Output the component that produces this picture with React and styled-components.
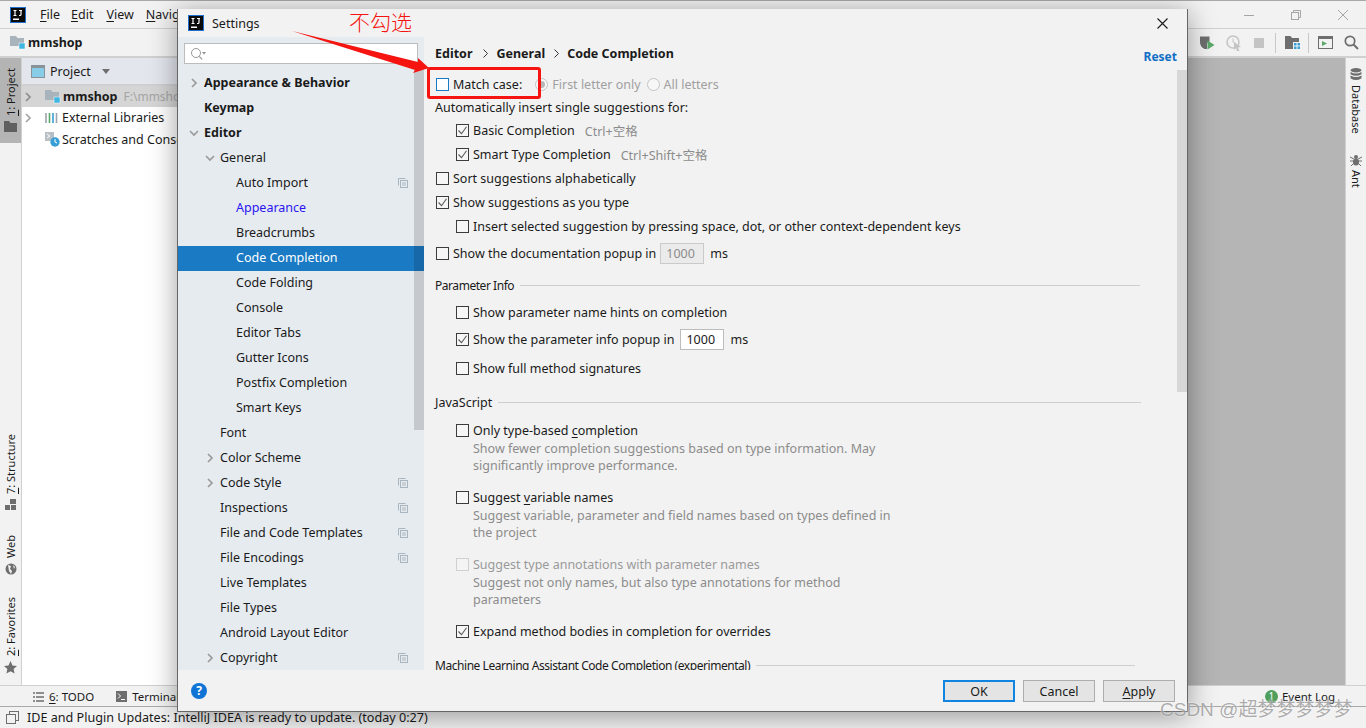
import styled, { createGlobalStyle } from 'styled-components';

const FONT = `'Noto Sans', 'Noto Sans CJK SC', sans-serif`;

const GlobalStyle = createGlobalStyle`
  html, body {
    margin: 0;
    padding: 0;
    background: #f2f2f2;
    overflow: hidden;
  }
  body {
    font-family: ${FONT};
    font-size: 12.5px;
    color: #1a1a1a;
  }
`;

const Page = styled.div`
  position: relative;
  width: 1366px;
  height: 728px;
  overflow: hidden;
  display: flex;
  flex-direction: column;
  background: #f2f2f2;
`;

/* ---------- IDE behind the dialog ---------- */

const MenuBar = styled.div`
  height: 27px;
  border-top: 1px solid #a8a8a8;
  border-bottom: 1px solid #d0d0d0;
  display: flex;
  align-items: center;
  padding: 0 18px 0 10px;
  flex-shrink: 0;
`;

const MenuItem = styled.span`
  margin-left: ${(p) => p.$gap}px;
  u { text-underline-offset: 2px; }
`;

const WindowControls = styled.div`
  margin-left: auto;
  display: flex;
  gap: 37px;
  align-items: center;
`;

const NavBar = styled.div`
  height: 27px;
  border-bottom: 2px solid #d0d0d0;
  display: flex;
  align-items: center;
  padding: 0 7px 0 10px;
  flex-shrink: 0;
`;

const NavTitle = styled.span`
  font-weight: 700;
  margin-left: 2px;
`;

const Toolbar = styled.div`
  margin-left: auto;
  display: flex;
  align-items: center;
`;

const ToolIcon = styled.svg`
  display: block;
  flex-shrink: 0;
  margin-left: ${(p) => p.$gap || 0}px;
`;

const ToolSep = styled.span`
  width: 1px;
  height: 20px;
  background: #c8c8c8;
  margin-left: ${(p) => p.$gap}px;
`;

const Main = styled.div`
  flex: 1;
  display: flex;
  min-height: 0;
`;

const LeftStrip = styled.div`
  width: 21px;
  border-right: 1px solid #d0d0d0;
  display: flex;
  flex-direction: column;
  justify-content: space-between;
  padding-bottom: 11px;
  flex-shrink: 0;
`;

const StripButton = styled.div`
  display: flex;
  flex-direction: column;
  align-items: center;
  gap: ${(p) => p.$gap || 5}px;
  padding: ${(p) => (p.$active ? '10px 0 11px' : '0')};
  background: ${(p) => (p.$active ? '#b4b4b4' : 'transparent')};
  margin-top: ${(p) => p.$top || 0}px;
`;

const StripLabel = styled.span`
  writing-mode: vertical-rl;
  transform: rotate(180deg);
  font-size: 11px;
  line-height: 14px;
  padding-right: 1px;
  u { text-underline-offset: 1px; }
`;

const RightLabel = styled.span`
  writing-mode: vertical-rl;
  font-size: 11px;
  line-height: 14px;
`;

const StripBottom = styled.div`
  display: flex;
  flex-direction: column;
`;

const ProjectPane = styled.div`
  width: 156px;
  background: #fff;
  flex-shrink: 0;
`;

const PaneHeader = styled.div`
  height: 26px;
  border-bottom: 2px solid #d0d0d0;
  background: #e3e6ed;
  display: flex;
  align-items: center;
  padding-left: 9px;
  gap: 5px;
`;

const PaneCaret = styled.span`
  width: 0;
  height: 0;
  border-left: 4px solid transparent;
  border-right: 4px solid transparent;
  border-top: 5px solid #6e6e6e;
  margin-left: 6px;
`;

const TreeRow = styled.div`
  height: ${(p) => p.$h || 21}px;
  display: flex;
  align-items: center;
  padding-left: 1px;
  white-space: nowrap;
  overflow: hidden;
  background: ${(p) => (p.$selected ? '#d5d5d5' : 'transparent')};
  gap: 2px;
`;

const TreeBold = styled.b`
  font-weight: 700;
`;

const TreeHint = styled.span`
  color: #a5a5a5;
  font-size: 12px;
  margin-left: 4px;
`;

const EditorArea = styled.div`
  flex: 1;
  background: #b5b5b5;
`;

const RightStrip = styled.div`
  width: 20px;
  border-left: 1px solid #d0d0d0;
  display: flex;
  flex-direction: column;
  align-items: center;
  padding-top: 10px;
  flex-shrink: 0;
`;

const RightTool = styled.div`
  display: flex;
  flex-direction: column;
  align-items: center;
  gap: 4px;
  margin-bottom: 20px;
`;

const BottomBar = styled.div`
  height: 19px;
  border-top: 1px solid #d0d0d0;
  border-bottom: 1px solid #a9a9a9;
  display: flex;
  align-items: center;
  padding: 1px 31px 0 33px;
  font-size: 11.5px;
  flex-shrink: 0;
  u { text-underline-offset: 2px; }
`;

const BottomTool = styled.span`
  display: flex;
  align-items: center;
  gap: 5px;
  margin-right: ${(p) => p.$gap || 0}px;
`;

const EventLog = styled.span`
  margin-left: auto;
  display: flex;
  align-items: center;
  gap: 4px;
`;

const EventBadge = styled.span`
  width: 13px;
  height: 13px;
  border-radius: 50%;
  background: #4f9f5c;
  color: #fff;
  font-size: 10px;
  line-height: 13px;
  text-align: center;
`;

const StatusBar = styled.div`
  height: 21px;
  display: flex;
  align-items: center;
  padding-left: 6px;
  gap: 8px;
  font-size: 12.6px;
  flex-shrink: 0;
`;

/* ---------- settings dialog ---------- */

const Dialog = styled.div`
  position: absolute;
  left: 177px;
  top: 9px;
  width: 1011px;
  height: 703px;
  box-sizing: border-box;
  background: #f2f2f2;
  border: 1px solid #666;
  border-top: none;
  box-shadow: 0 4px 26px rgba(0, 0, 0, 0.38);
  display: flex;
  flex-direction: column;
`;

const TitleBar = styled.div`
  height: 28px;
  display: flex;
  align-items: center;
  padding: 0 19px 0 10px;
  gap: 8px;
  flex-shrink: 0;
`;

const CloseButton = styled.svg`
  margin-left: auto;
  display: block;
`;

const DialogBody = styled.div`
  flex: 1;
  display: flex;
  min-height: 0;
`;

const Sidebar = styled.div`
  position: relative;
  width: 246px;
  background: #e6ebf0;
  flex-shrink: 0;
  display: flex;
  flex-direction: column;
  overflow: hidden;
`;

const SearchBox = styled.div`
  margin: 6px 6px 7px 6px;
  height: 21px;
  box-sizing: border-box;
  background: #fff;
  border: 1px solid #bcbcbc;
  display: flex;
  align-items: center;
  padding-left: 5px;
  flex-shrink: 0;
`;

const SideTree = styled.div`
  display: flex;
  flex-direction: column;
`;

const SideRow = styled.div`
  height: 25px;
  box-sizing: border-box;
  flex-shrink: 0;
  display: flex;
  align-items: center;
  padding: 0 16px 2px ${(p) => 11 + p.$level * 16}px;
  white-space: nowrap;
  font-weight: ${(p) => (p.$level === 0 ? 700 : 400)};
  color: ${(p) => (p.$selected ? '#fff' : p.$link ? '#2a14f0' : '#1a1a1a')};
  background: ${(p) => (p.$selected ? '#1a7ac4' : 'transparent')};
`;

const ArrowSlot = styled.span`
  width: 15px;
  flex-shrink: 0;
  display: flex;
  align-items: center;
`;

const CopyMark = styled.svg`
  margin-left: auto;
  display: block;
`;

const SideScroll = styled.div`
  position: absolute;
  right: 0;
  top: 33px;
  width: 10px;
  height: 360px;
  background: rgba(0, 0, 0, 0.14);
`;

const Panel = styled.div`
  position: relative;
  flex: 1;
  min-width: 0;
  display: flex;
  flex-direction: column;
`;

const PanelHeader = styled.div`
  height: 33px;
  flex-shrink: 0;
  display: flex;
  padding: 7px 10px 0 11px;
  box-sizing: border-box;
  font-weight: 700;
`;

const Crumb = styled.span`
  display: flex;
  align-items: center;
  height: 18px;
`;

const CrumbSep = styled.svg`
  margin: 0 8px 0 ${(p) => p.$left}px;
  display: block;
`;

const ResetLink = styled.a`
  margin-left: auto;
  color: #0f6fc6;
  margin-top: 4px;
  height: 18px;
  font-size: 12px;
  line-height: 18px;
`;

const PanelScroll = styled.div`
  flex: 1;
  min-height: 0;
  overflow: hidden;
  padding-left: 11px;
`;

const Row = styled.div`
  height: 18px;
  margin-top: ${(p) => p.$top || 0}px;
  padding-left: ${(p) => (p.$indent ? 21 : 1)}px;
  display: flex;
  align-items: center;
  white-space: nowrap;
  color: ${(p) => (p.$muted ? '#9a9a9a' : '#1a1a1a')};
  u { text-underline-offset: 2px; }
`;

const PlainRow = styled(Row)`
  padding-left: 0;
`;

const RowText = styled.span`
  color: ${(p) => (p.$muted ? '#a0a0a0' : 'inherit')};
`;

const Box = styled.span`
  width: 13px;
  height: 13px;
  flex-shrink: 0;
  margin-right: 4px;
  box-sizing: border-box;
  border: 1px solid ${(p) => (p.$focus ? '#1a7ac4' : p.$disabled ? '#d0d0d0' : '#3c3c3c')};
  background: ${(p) => (p.$focus ? '#fff' : p.$disabled ? '#f4f4f4' : '#f6f6f6')};
  display: flex;
  align-items: center;
  justify-content: center;
`;

const Radio = styled.span`
  width: 13px;
  height: 13px;
  flex-shrink: 0;
  box-sizing: border-box;
  margin: 0 4px 0 ${(p) => p.$left}px;
  border: 1px solid #c4c4c4;
  border-radius: 50%;
  background: #f7f7f7;
  display: flex;
  align-items: center;
  justify-content: center;
  &::after {
    content: '';
    width: 7px;
    height: 7px;
    border-radius: 50%;
    background: ${(p) => (p.$on ? '#b8b8b8' : 'transparent')};
  }
`;

const Shortcut = styled.span`
  color: #8c8c8c;
  margin-left: ${(p) => p.$left}px;
`;

const NumberField = styled.span`
  width: 44px;
  height: 21px;
  box-sizing: border-box;
  margin: 0 6px 0 ${(p) => (p.$disabled ? 4 : 6)}px;
  padding-left: 5px;
  line-height: 19px;
  border: 1px solid ${(p) => (p.$disabled ? '#cacaca' : '#bcbcbc')};
  background: ${(p) => (p.$disabled ? '#ebebeb' : '#fff')};
  color: ${(p) => (p.$disabled ? '#8c8c8c' : '#1a1a1a')};
`;

const Description = styled.div`
  padding: 1px 0 0 38px;
  line-height: 17px;
  color: #8c8c8c;
  white-space: nowrap;
`;

const SectionTitle = styled.div`
  height: 18px;
  margin-top: ${(p) => p.$top}px;
  display: flex;
  align-items: center;
  white-space: nowrap;
  gap: 6px;
  font-size: ${(p) => (p.$tight ? 12 : 12.5)}px;
  letter-spacing: ${(p) => (p.$tight ? -0.45 : 0)}px;
  &::after {
    content: '';
    height: 1px;
    background: #cfcfcf;
    width: ${(p) => p.$line}px;
  }
`;

const PanelThumb = styled.div`
  position: absolute;
  right: 0;
  top: 33px;
  width: 10px;
  height: 322px;
  background: #d7d7d7;
`;

const Footer = styled.div`
  height: 41px;
  box-sizing: border-box;
  flex-shrink: 0;
  display: flex;
  align-items: center;
  padding: 1px 12px 0 13px;
  gap: 8px;
`;

const HelpButton = styled.span`
  width: 16px;
  height: 16px;
  border-radius: 50%;
  background: #0f74d6;
  color: #fff;
  font-size: 12px;
  font-weight: 700;
  line-height: 16px;
  text-align: center;
  margin-right: auto;
`;

const DialogButton = styled.button`
  width: 72px;
  height: 22px;
  box-sizing: border-box;
  padding: 0;
  font: inherit;
  color: #1a1a1a;
  background: #e4e4e4;
  border: ${(p) => (p.$primary ? '2px solid #0f84e0' : '1px solid #adadad')};
  u { text-underline-offset: 2px; }
`;

/* ---------- things drawn over the screenshot ---------- */

const RedBox = styled.div`
  position: absolute;
  left: 427px;
  top: 67px;
  width: 114px;
  height: 32px;
  box-sizing: border-box;
  border: 3px solid #f5140f;
  border-radius: 3px;
`;

const RedArrow = styled.svg`
  position: absolute;
  left: 285px;
  top: 25px;
`;

const RedNote = styled.span`
  position: absolute;
  left: 349px;
  top: 6px;
  font-family: 'Noto Sans CJK SC', sans-serif;
  font-weight: 300;
  font-size: 21px;
  line-height: 30px;
  color: #f5140f;
`;

const Watermark = styled.span`
  position: absolute;
  left: 1160px;
  top: 697px;
  font-family: 'Liberation Sans', 'Noto Sans CJK SC', sans-serif;
  font-size: 19px;
  line-height: 26px;
  white-space: nowrap;
  color: rgba(120, 120, 120, 0.6);
  text-shadow: 0 0 2px rgba(255, 255, 255, 0.9);
`;

const TickSvg = styled.svg`
  display: block;
`;

/* ---------- icons ---------- */

const IjLogo = () => (
  <ToolIcon width="16" height="16" viewBox="0 0 16 16">
    <rect x="0.5" y="0.5" width="15" height="15" fill="#0b0b0b" stroke="#1f6fd0" />
    <rect x="3" y="11.5" width="6" height="1.5" fill="#fff" />
    <path d="M3.5 3.5h3M5 3.5v5M3.5 8.5h3M9 3.5h3M11 3.5v4q0 1-1 1H9" fill="none" stroke="#fff" strokeWidth="1.2" />
  </ToolIcon>
);

const ModuleFolder = ({ gap }) => (
  <ToolIcon $gap={gap} width="16" height="15" viewBox="0 0 16 15">
    <path d="M0 1h6l1.5 2H14v8H0z" fill="#a9b3bb" />
    <rect x="9" y="8" width="6" height="6" fill="#40b6e0" stroke="#fff" strokeWidth="0.5" />
  </ToolIcon>
);

const Chevron = ({ open, color = '#9a9a9a' }) => (
  <ToolIcon width="10" height="10" viewBox="0 0 10 10">
    <path
      d={open ? 'M1 3l4 4 4-4' : 'M3 1l4 4-4 4'}
      fill="none"
      stroke={color}
      strokeWidth="1.7"
    />
  </ToolIcon>
);

const Copy = () => (
  <CopyMark width="10" height="10" viewBox="0 0 10 10">
    <path d="M0.5 7.5v-7h7" fill="none" stroke="#a9b6bf" />
    <rect x="2.5" y="2.5" width="7" height="7" fill="none" stroke="#a9b6bf" />
    <path d="M4 5h4M4 7h4" stroke="#a9b6bf" />
  </CopyMark>
);

const Tick = () => (
  <TickSvg width="11" height="11" viewBox="0 0 11 11">
    <path d="M1.5 5.5l3 3.2 5-7" fill="none" stroke="#5a5a5a" strokeWidth="1.1" />
  </TickSvg>
);

const SearchGlyph = () => (
  <ToolIcon width="16" height="14" viewBox="0 0 16 14">
    <circle cx="6" cy="6" r="4.5" fill="none" stroke="#9a9a9a" />
    <path d="M9.2 9.4l3 3" stroke="#9a9a9a" strokeWidth="1.3" />
    <path d="M12 5h4l-2 2.4z" fill="#8c8c8c" />
  </ToolIcon>
);

const Check = ({ on, focus, disabled }) => (
  <Box $focus={focus} $disabled={disabled}>{on && <Tick />}</Box>
);

/* ---------- data ---------- */

const sideItems = [
  { label: 'Appearance & Behavior', level: 0, arrow: 'closed' },
  { label: 'Keymap', level: 0 },
  { label: 'Editor', level: 0, arrow: 'open' },
  { label: 'General', level: 1, arrow: 'open' },
  { label: 'Auto Import', level: 2, copy: true },
  { label: 'Appearance', level: 2, link: true },
  { label: 'Breadcrumbs', level: 2 },
  { label: 'Code Completion', level: 2, selected: true },
  { label: 'Code Folding', level: 2 },
  { label: 'Console', level: 2 },
  { label: 'Editor Tabs', level: 2 },
  { label: 'Gutter Icons', level: 2 },
  { label: 'Postfix Completion', level: 2 },
  { label: 'Smart Keys', level: 2 },
  { label: 'Font', level: 1 },
  { label: 'Color Scheme', level: 1, arrow: 'closed' },
  { label: 'Code Style', level: 1, arrow: 'closed', copy: true },
  { label: 'Inspections', level: 1, copy: true },
  { label: 'File and Code Templates', level: 1, copy: true },
  { label: 'File Encodings', level: 1, copy: true },
  { label: 'Live Templates', level: 1 },
  { label: 'File Types', level: 1 },
  { label: 'Android Layout Editor', level: 1 },
  { label: 'Copyright', level: 1, arrow: 'closed', copy: true },
];

const App = () => (
  <Page>
    <GlobalStyle />

    <MenuBar>
      <IjLogo />
      <MenuItem $gap={14}><u>F</u>ile</MenuItem>
      <MenuItem $gap={11}><u>E</u>dit</MenuItem>
      <MenuItem $gap={13}><u>V</u>iew</MenuItem>
      <MenuItem $gap={12}><u>N</u>avigate</MenuItem>
      <WindowControls>
        <ToolIcon width="10" height="10" viewBox="0 0 10 10">
          <path d="M0 5.5h10" stroke="#a5a5a5" />
        </ToolIcon>
        <ToolIcon width="10" height="10" viewBox="0 0 10 10">
          <rect x="0.5" y="2.5" width="7" height="7" fill="none" stroke="#a5a5a5" />
          <path d="M2.5 2.5v-2h7v7h-2" fill="none" stroke="#a5a5a5" />
        </ToolIcon>
        <ToolIcon width="10" height="10" viewBox="0 0 10 10">
          <path d="M0 0l10 10M10 0L0 10" stroke="#a5a5a5" />
        </ToolIcon>
      </WindowControls>
    </MenuBar>

    <NavBar>
      <ModuleFolder />
      <NavTitle>mmshop</NavTitle>
      <Toolbar>
        <ToolIcon width="16" height="15" viewBox="0 0 16 15">
          <path d="M1 1.5h9.5v5L8 8v6H5.5Q1 12 1 7z" fill="#6e6e6e" />
          <path d="M8.5 5.5l7 4.5-7 4.5z" fill="#59a869" />
        </ToolIcon>
        <ToolIcon $gap={11} width="16" height="16" viewBox="0 0 16 16">
          <circle cx="7" cy="7" r="6" fill="none" stroke="#c4c4c4" strokeWidth="1.5" />
          <path d="M7 3.5V7l2.5 1.5" fill="none" stroke="#c4c4c4" />
          <path d="M8 7l7 5-3 .5L13.5 16 11 16l-1-3-2 2z" fill="#c4c4c4" />
        </ToolIcon>
        <ToolIcon $gap={12} width="10" height="10" viewBox="0 0 10 10">
          <rect width="10" height="10" fill="#c4c4c4" />
        </ToolIcon>
        <ToolSep $gap={11} />
        <ToolIcon $gap={9} width="15" height="13" viewBox="0 0 15 13">
          <path d="M0 0h5.5l1.5 2h7v4H8v7H0z" fill="#6e6e6e" />
          <path d="M9 7h2.5v2.5H9z" fill="#389fd6" />
          <path d="M12.5 7H15v2.5h-2.5zM9 10.5h2.5V13H9zM12.5 10.5H15V13h-2.5z" fill="#389fd6" />
        </ToolIcon>
        <ToolSep $gap={8} />
        <ToolIcon $gap={9} width="15" height="13" viewBox="0 0 15 13">
          <rect x="0.5" y="0.5" width="14" height="12" fill="none" stroke="#6e6e6e" />
          <rect x="0" y="0" width="15" height="3" fill="#6e6e6e" />
          <path d="M4 5l5 2.5L4 10z" fill="#59a869" />
        </ToolIcon>
        <ToolIcon $gap={11} width="15" height="15" viewBox="0 0 15 15">
          <circle cx="6" cy="6" r="4.7" fill="none" stroke="#6e6e6e" strokeWidth="1.7" />
          <path d="M9.5 9.5l4.5 4.5" stroke="#6e6e6e" strokeWidth="2" />
        </ToolIcon>
      </Toolbar>
    </NavBar>

    <Main>
      <LeftStrip>
        <StripButton $active $gap={5}>
          <StripLabel><u>1</u>: Project</StripLabel>
          <ToolIcon width="13" height="11" viewBox="0 0 13 11">
            <path d="M0 0h5l1.5 2H13v9H0z" fill="#5f5f5f" />
          </ToolIcon>
        </StripButton>
        <StripBottom>
          <StripButton>
            <StripLabel><u>7</u>: Structure</StripLabel>
            <ToolIcon width="12" height="12" viewBox="0 0 12 12">
              <path d="M5 0h6v5H5zM0 6h5v5H0zM6 6h5v5H6z" fill="#6e6e6e" />
            </ToolIcon>
          </StripButton>
          <StripButton $top={24}>
            <StripLabel>Web</StripLabel>
            <ToolIcon width="12" height="12" viewBox="0 0 12 12">
              <circle cx="6" cy="6" r="5.5" fill="#6e6e6e" />
              <path d="M3 2l3 1-1 3 2 2-1 3-2-3zM8 2l2 2-1 2z" fill="#f2f2f2" />
            </ToolIcon>
          </StripButton>
          <StripButton $top={22}>
            <StripLabel><u>2</u>: Favorites</StripLabel>
            <ToolIcon width="13" height="13" viewBox="0 0 13 13">
              <path d="M6.5 0l2 4.4 4.5.5-3.4 3.1 1 4.6-4.1-2.4-4.1 2.4 1-4.6L0 4.9l4.5-.5z" fill="#6e6e6e" />
            </ToolIcon>
          </StripButton>
        </StripBottom>
      </LeftStrip>

      <ProjectPane>
        <PaneHeader>
          <ToolIcon width="14" height="13" viewBox="0 0 14 13">
            <rect x="0.5" y="0.5" width="13" height="12" fill="#87cde8" stroke="#8a9299" />
            <rect x="0" y="0" width="14" height="3" fill="#8a9299" />
          </ToolIcon>
          Project
          <PaneCaret />
        </PaneHeader>
        <TreeRow $selected>
          <Chevron color="#8c8c8c" />
          <ModuleFolder gap={10} />
          <TreeBold>mmshop</TreeBold>
          <TreeHint>F:\mmshop</TreeHint>
        </TreeRow>
        <TreeRow>
          <Chevron color="#a5a5a5" />
          <ToolIcon $gap={10} width="15" height="12" viewBox="0 0 15 12">
            <path d="M1 1v10" stroke="#9aa5ad" strokeWidth="1.6" />
            <path d="M4.5 1v10" stroke="#59a869" strokeWidth="1.6" />
            <path d="M8 1v10" stroke="#389fd6" strokeWidth="1.6" />
            <path d="M11.5 1v10" stroke="#9aa5ad" strokeWidth="1.6" />
          </ToolIcon>
          External Libraries
        </TreeRow>
        <TreeRow $h={22}>
          <ToolIcon $gap={22} width="15" height="15" viewBox="0 0 15 15">
            <path d="M0 0h9v9H0z" fill="#b8c0c6" />
            <path d="M2 2l3 2-3 2" fill="none" stroke="#fff" />
            <circle cx="10" cy="10" r="4.7" fill="#389fd6" />
            <path d="M10 7v3l2 1" fill="none" stroke="#fff" />
          </ToolIcon>
          Scratches and Consoles
        </TreeRow>
      </ProjectPane>

      <EditorArea />

      <RightStrip>
        <RightTool>
          <ToolIcon width="12" height="13" viewBox="0 0 12 13">
            <ellipse cx="6" cy="2.2" rx="5.5" ry="2.2" fill="#6e6e6e" />
            <path d="M.5 4v2.2q5.5 3 11 0V4q-5.5 3-11 0zM.5 7.6v2.6q5.5 3.8 11 0V7.6q-5.5 3-11 0z" fill="#6e6e6e" />
          </ToolIcon>
          <RightLabel>Database</RightLabel>
        </RightTool>
        <RightTool>
          <ToolIcon width="12" height="12" viewBox="0 0 12 12">
            <ellipse cx="6" cy="3" rx="2" ry="2" fill="#6e6e6e" />
            <ellipse cx="6" cy="8" rx="3" ry="3.6" fill="#6e6e6e" />
            <path d="M0 3l4 2M12 3L8 5M0 7h4M12 7H8M1 12l3-3M11 12L8 9" stroke="#6e6e6e" />
          </ToolIcon>
          <RightLabel>Ant</RightLabel>
        </RightTool>
      </RightStrip>
    </Main>

    <BottomBar>
      <BottomTool $gap={22}>
        <ToolIcon width="11" height="10" viewBox="0 0 11 10">
          <path d="M0 1h2M3 1h8M0 5h2M3 5h8M0 9h2M3 9h8" stroke="#6e6e6e" strokeWidth="1.4" />
        </ToolIcon>
        <span><u>6</u>: TODO</span>
      </BottomTool>
      <BottomTool>
        <ToolIcon width="11" height="11" viewBox="0 0 11 11">
          <rect width="11" height="11" fill="#6e6e6e" />
          <path d="M2 2.5l2.5 2.5L2 7.5M5 8.5h4" fill="none" stroke="#fff" />
        </ToolIcon>
        Terminal
      </BottomTool>
      <EventLog>
        <EventBadge>1</EventBadge>
        Event Log
      </EventLog>
    </BottomBar>

    <StatusBar>
      <ToolIcon width="13" height="13" viewBox="0 0 13 13">
        <rect x="3.5" y="0.5" width="9" height="9" fill="none" stroke="#6e6e6e" />
        <rect x="0.5" y="3.5" width="9" height="9" fill="#f2f2f2" stroke="#6e6e6e" />
      </ToolIcon>
      IDE and Plugin Updates: IntelliJ IDEA is ready to update. (today 0:27)
    </StatusBar>

    <Dialog>
      <TitleBar>
        <IjLogo />
        Settings
        <CloseButton width="11" height="11" viewBox="0 0 11 11">
          <path d="M0.5 0.5l10 10M10.5 0.5l-10 10" stroke="#1a1a1a" strokeWidth="1.1" />
        </CloseButton>
      </TitleBar>

      <DialogBody>
        <Sidebar>
          <SearchBox><SearchGlyph /></SearchBox>
          <SideTree>
            {sideItems.map((item) => (
              <SideRow key={item.label} $level={item.level} $selected={item.selected} $link={item.link}>
                <ArrowSlot>
                  {item.arrow && <Chevron open={item.arrow === 'open'} />}
                </ArrowSlot>
                {item.label}
                {item.copy && <Copy />}
              </SideRow>
            ))}
          </SideTree>
          <SideScroll />
        </Sidebar>

        <Panel>
          <PanelHeader>
            <Crumb>Editor</Crumb>
            <Crumb>
              <CrumbSep $left={11} width="5" height="9" viewBox="0 0 5 9">
                <path d="M0.5 0.5l4 4-4 4" fill="none" stroke="#333" />
              </CrumbSep>
            </Crumb>
            <Crumb>General</Crumb>
            <Crumb>
              <CrumbSep $left={9} width="5" height="9" viewBox="0 0 5 9">
                <path d="M0.5 0.5l4 4-4 4" fill="none" stroke="#333" />
              </CrumbSep>
            </Crumb>
            <Crumb>Code Completion</Crumb>
            <ResetLink>Reset</ResetLink>
          </PanelHeader>

          <PanelScroll>
            <Row $top={5}>
              <Check focus />
              Match case:
              <Radio $left={13} $on />
              <RowText $muted>First letter only</RowText>
              <Radio $left={6} />
              <RowText $muted>All letters</RowText>
            </Row>
            <PlainRow $top={5}>Automatically insert single suggestions for:</PlainRow>
            <Row $top={5} $indent>
              <Check on />
              Basic Completion
              <Shortcut $left={10}>Ctrl+空格</Shortcut>
            </Row>
            <Row $top={6} $indent>
              <Check on />
              Smart Type Completion
              <Shortcut $left={10}>Ctrl+Shift+空格</Shortcut>
            </Row>
            <Row $top={6}><Check />Sort suggestions alphabetically</Row>
            <Row $top={6}><Check on />Show suggestions as you type</Row>
            <Row $top={6} $indent><Check />Insert selected suggestion by pressing space, dot, or other context-dependent keys</Row>
            <Row $top={9}>
              <Check />
              Show the documentation popup in
              <NumberField $disabled>1000</NumberField>
              ms
            </Row>

            <SectionTitle $top={14} $line={620} $tight>Parameter Info</SectionTitle>
            <Row $top={9} $indent><Check />Show parameter name hints on completion</Row>
            <Row $top={9} $indent>
              <Check on />
              Show the parameter info popup in
              <NumberField>1000</NumberField>
              ms
            </Row>
            <Row $top={11} $indent><Check />Show full method signatures</Row>

            <SectionTitle $top={16} $line={643}>JavaScript</SectionTitle>
            <Row $top={10} $indent><Check /><RowText>Only type-based <u>c</u>ompletion</RowText></Row>
            <Description>Show fewer completion suggestions based on type information. May<br />significantly improve performance.</Description>
            <Row $top={14} $indent><Check /><RowText>Suggest <u>v</u>ariable names</RowText></Row>
            <Description>Suggest variable, parameter and field names based on types defined in<br />the project</Description>
            <Row $top={14} $indent $muted><Check disabled />Suggest type annotations with parameter names</Row>
            <Description>Suggest not only names, but also type annotations for method<br />parameters</Description>
            <Row $top={14} $indent><Check on />Expand method bodies in completion for overrides</Row>

            <SectionTitle $top={16} $line={379} $tight>Machine Learning Assistant Code Completion (experimental)</SectionTitle>
          </PanelScroll>
          <PanelThumb />
        </Panel>
      </DialogBody>

      <Footer>
        <HelpButton>?</HelpButton>
        <DialogButton $primary>OK</DialogButton>
        <DialogButton>Cancel</DialogButton>
        <DialogButton><u>A</u>pply</DialogButton>
      </Footer>
    </Dialog>

    <RedNote>不勾选</RedNote>
    <RedArrow width="150" height="55" viewBox="0 0 150 55">
      <path d="M7 6L133 37v-4l11 10-16 5 2-3z" fill="#f5140f" />
    </RedArrow>
    <RedBox />
    <Watermark>CSDN @超梦梦梦梦梦</Watermark>
  </Page>
);

export default App;
